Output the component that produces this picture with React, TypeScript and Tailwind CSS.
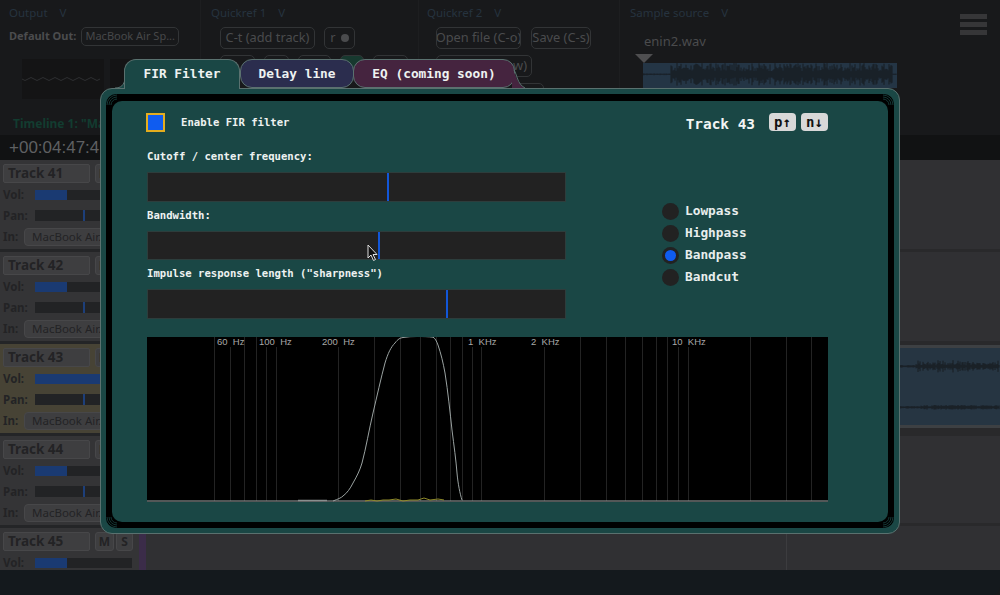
import type { ReactNode } from "react";

const mono = "font-['DejaVu_Sans_Mono',monospace]";

// deterministic noisy waveform, drawn as vertical ticks
function wave(width: number, mid: number, amp: (x: number) => number, seed: number) {
  let d = "";
  let s = seed;
  for (let x = 0; x < width; x += 1) {
    s = (s * 9301 + 49297) % 233280;
    const h = amp(x) * (0.25 + (s / 233280) * 0.75);
    d += `M${x} ${(mid - h).toFixed(1)}V${(mid + h + 0.6).toFixed(1)}`;
  }
  return d;
}

function GhostButton({ label, className }: { label: ReactNode; className: string }) {
  return (
    <div className={`h-[22px] flex items-center justify-center border border-[#323436] rounded-[5px] text-[#4a4b4d] text-[12.8px] whitespace-nowrap overflow-hidden ${className}`}>
      {label}
    </div>
  );
}

function SectionTitle({ label }: { label: string }) {
  return (
    <div className="flex gap-[12px] text-[#26333f] text-[11.5px] leading-none">
      <span>{label}</span>
      <span>V</span>
    </div>
  );
}

function TopPanels() {
  return (
    <div className="h-[135px] flex bg-[#18191b] font-['Noto_Sans',sans-serif]">
      <div className="w-[201px] shrink-0 border-r border-[#1d1e20] pl-[9px] pt-[7px]">
        <SectionTitle label="Output" />
        <div className="flex items-center gap-[5px] mt-[8px]">
          <span className="text-[11px] font-bold text-[#4b4c4e]">Default Out:</span>
          <div className="w-[98px] h-[19px] flex items-center justify-center border border-[#323436] rounded-[5px] text-[#47484a] text-[11px]">MacBook Air Sp...</div>
        </div>
        <div className="flex gap-[6px] ml-[13px] mt-[13px] h-[40px]">
          <div className="w-[82px] bg-[#141415] flex items-center">
            <svg width="82" height="40" viewBox="0 0 82 40">
              <path d="M0 20q3 3 6 0t6 0 6 0 6 0 6 0 6 0 6 0 6 0 6 0 6 0 6 0 6 0 6 0" fill="none" stroke="#2e2f31" strokeWidth="1" />
            </svg>
          </div>
          <div className="flex-1 bg-[#141415]" />
        </div>
        <div className="mt-[19px] ml-[4px] text-[12px] font-bold text-[#123c30] leading-none whitespace-nowrap">Timeline 1: "Main"</div>
      </div>
      <div className="w-[218px] shrink-0 border-r border-[#1d1e20] pl-[10px] pt-[7px]">
        <SectionTitle label="Quickref 1" />
        <div className="flex gap-[9px] ml-[9px] mt-[8px]">
          <GhostButton label="C-t (add track)" className="w-[95px]" />
          <GhostButton
            label={
              <span className="flex items-center gap-[5px]">
                r<span className="w-[8px] h-[8px] rounded-full bg-[#4a4b4d]" />
              </span>
            }
            className="w-[31px]"
          />
        </div>
        <div className="flex gap-[9px] ml-[9px] mt-[6px]">
          <GhostButton label="" className="w-[35px]" />
          <GhostButton label="" className="w-[25px]" />
          <GhostButton label="" className="w-[33px]" />
          <GhostButton label="" className="w-[24px] bg-[#17392f]" />
          <GhostButton label="" className="w-[35px]" />
        </div>
      </div>
      <div className="w-[201px] shrink-0 border-r border-[#1d1e20] pl-[8px] pt-[7px]">
        <SectionTitle label="Quickref 2" />
        <div className="flex gap-[10px] ml-[9px] mt-[8px]">
          <GhostButton label="Open file (C-o)" className="w-[85px]" />
          <GhostButton label="Save (C-s)" className="w-[60px]" />
        </div>
        <div className="ml-[9px] mt-[6px] w-[96px]">
          <GhostButton label="w)" className="w-[96px] justify-end! pr-[4px]" />
        </div>
        <div className="ml-[9px] mt-[6px] w-[108px]">
          <GhostButton label="" className="w-[108px]" />
        </div>
      </div>
      <div className="flex-1 relative pl-[10px] pt-[7px]">
        <SectionTitle label="Sample source" />
        <div className="ml-[14px] mt-[16px] text-[13px] leading-none text-[#4a4b4d]">enin2.wav</div>
        <svg width="18" height="9" viewBox="0 0 18 9" className="ml-[5px] mt-[6px] block">
          <path d="M0 0H18L9 9Z" fill="#4e4e50" />
        </svg>
        <div className="ml-[13px] w-[254px] h-[25px] bg-[#243545] overflow-hidden">
          <svg width="254" height="25" viewBox="0 0 254 25">
            <path d={wave(254, 11, (x) => (x < 28 ? 0.6 : x < 250 ? 11 : 0.5), 17)} stroke="#15181b" strokeWidth="0.8" />
          </svg>
        </div>
        <div className="absolute left-[340px] top-[14px] flex flex-col gap-[3px]">
          <div className="w-[27px] h-[5px] bg-[#363638]" />
          <div className="w-[27px] h-[5px] bg-[#363638]" />
          <div className="w-[27px] h-[5px] bg-[#363638]" />
        </div>
      </div>
    </div>
  );
}

function TrackStrip({ name, active, volWidth, short }: { name: string; active?: boolean; volWidth: string; short?: boolean }) {
  return (
    <div className={`overflow-hidden pl-[3px] pt-[4px] font-['Noto_Sans',sans-serif] ${active ? "bg-[#474335]" : "bg-[#343436]"} ${short ? "h-[50px]" : "h-[92px] border-b-[3px] border-[#242527]"}`}>
      <div className="flex">
        <div className="w-[87px] h-[19px] flex items-center pl-[4px] bg-[#3e3e40] border border-[#474749] rounded-[2px] text-[13.5px] font-bold text-[#232325]">{name}</div>
        <div className="w-[19px] h-[19px] ml-[5px] flex items-center justify-center bg-[#3e3e40] border border-[#474749] rounded-[3px] text-[12px] font-bold text-[#232325]">M</div>
        <div className="w-[17px] h-[19px] ml-[2px] flex items-center justify-center bg-[#3e3e40] border border-[#474749] rounded-[3px] text-[12px] font-bold text-[#232325]">S</div>
      </div>
      <div className="flex items-center h-[20px] mt-[2px]">
        <span className="w-[32px] text-[11.5px] font-bold text-[#232325]">Vol:</span>
        <div className="w-[97px] h-[10px] bg-[#222325]">
          <div className={`h-full bg-[#1a3a72] ${volWidth}`} />
        </div>
      </div>
      {!short && (
        <>
          <div className="flex items-center h-[21px]">
            <span className="w-[32px] text-[11.5px] font-bold text-[#232325]">Pan:</span>
            <div className="w-[97px] h-[11px] bg-[#222325] pl-[48px]">
              <div className="w-[2px] h-full bg-[#1d3f7a]" />
            </div>
          </div>
          <div className="flex items-center h-[21px]">
            <span className="w-[21px] text-[11.5px] font-bold text-[#232325]">In:</span>
            <div className="w-[108px] h-[18px] flex items-center pl-[7px] bg-[#3e3e40] border border-[#474749] rounded-[4px] text-[11.5px] text-[#232325] whitespace-nowrap overflow-hidden">MacBook Air...</div>
          </div>
        </>
      )}
    </div>
  );
}

function Arrangement() {
  return (
    <div className="flex-1 flex min-h-0 overflow-hidden">
      <div className="w-[139px] shrink-0">
        <TrackStrip name="Track 41" volWidth="w-[32px]" />
        <TrackStrip name="Track 42" volWidth="w-[32px]" />
        <TrackStrip name="Track 43" volWidth="w-[80px]" active />
        <TrackStrip name="Track 44" volWidth="w-[32px]" />
        <TrackStrip name="Track 45" volWidth="w-[32px]" short />
      </div>
      <div className="w-[7px] shrink-0 bg-[#3b2c49]" />
      <div className="flex-1 bg-[#303033] flex flex-col">
        <div className="h-[92px] border-b-[3px] border-[#29292b]" />
        <div className="h-[92px] border-b-[3px] border-[#29292b]" />
        <div className="h-[92px] border-b-[3px] border-[#29292b] bg-[#29292b] pt-[1px]">
          <div className="h-[83px] bg-[#263542] border-y-[3px] border-r-2 border-[#3d4043] overflow-hidden">
            <svg width="854" height="77" viewBox="0 0 854 77">
              <path d={wave(854, 18, (x) => (x < 770 ? 1 : 2 + ((x * 7) % 5)), 41)} stroke="#14171a" strokeWidth="0.8" />
              <path d={wave(854, 59, (x) => (x < 775 ? 1 : 2 + ((x * 5) % 5)), 83)} stroke="#14171a" strokeWidth="0.8" />
            </svg>
          </div>
        </div>
        <div className="h-[90px] border-b-[3px] border-[#29292b]" />
        <div className="flex-1 pl-[640px]">
          <div className="w-px h-full bg-[#3c3c3f]" />
        </div>
      </div>
    </div>
  );
}

function Background() {
  return (
    <div className="w-[1000px] h-[595px] flex flex-col bg-[#18191b] overflow-hidden">
      <TopPanels />
      <div className="h-[25px] bg-[#111213] pl-[9px] pt-[1px] text-[17px] leading-[24px] text-[#5f6062] font-['Liberation_Sans',sans-serif]">+00:04:47:4</div>
      <Arrangement />
      <div className="h-[25px] bg-[#14191d] rounded-br-[8px]" />
    </div>
  );
}

function Tab({ label, className }: { label: string; className: string }) {
  return (
    <div className={`flex items-center justify-center rounded-[12px] border border-[#5a716f] font-bold text-[12.8px] text-[#eef2f1] ${mono} ${className}`}>
      {label}
    </div>
  );
}

function Slider({ label, pos }: { label: string; pos: string }) {
  return (
    <div>
      <div className={`h-[14px] flex items-center font-bold text-[10.6px] text-[#eef2f1] ${mono}`}>{label}</div>
      <div className="h-[29.5px] mt-[8px] bg-[#222222] border border-[#2d3d3c] flex">
        <div className={pos} />
        <div className="w-[2px] bg-[#1257d8]" />
      </div>
    </div>
  );
}

function Radio({ label, checked }: { label: string; checked?: boolean }) {
  return (
    <div className="h-[22px] flex items-center gap-[6px]">
      <div className="w-[17px] h-[17px] rounded-full bg-[#222222] flex items-center justify-center">
        {checked && <div className="w-[11px] h-[11px] rounded-full bg-[#0f5cf0]" />}
      </div>
      <span className={`font-bold text-[12.8px] text-[#e8eeed] ${mono}`}>{label}</span>
    </div>
  );
}

const gridLines = [214.5, 230.5, 244.5, 256.5, 266.5, 276.5, 338.5, 374.5, 400.5, 420.5, 436.5, 450.5, 462.5, 472.5, 481.5, 544.5, 580.5, 606.5, 625.5, 642.5, 656.5, 667.5, 678.5, 688.5, 750.5, 786.5, 811.5];
// these start below their frequency label
const underLabel = [230.5, 266.5, 276.5, 338.5, 472.5, 481.5, 544.5, 678.5, 688.5];
const freqLabels: [number, string][] = [[217, "60  Hz"], [259, "100  Hz"], [322, "200  Hz"], [468, "1  KHz"], [531, "2  KHz"], [672, "10  KHz"]];

function Spectrum() {
  return (
    <svg width="681" height="165" viewBox="147 337 681 165" className="block bg-black">
      {gridLines.map((x) => (
        <line key={x} x1={x} x2={x} y1={underLabel.includes(x) ? 347 : 337} y2="501" stroke="#232323" strokeWidth="1" />
      ))}
      {freqLabels.map(([x, t]) => (
        <text key={t} x={x} y="345" fill="#a8a8a8" fontSize="9.5" fontFamily="'Liberation Sans',sans-serif" xmlSpace="preserve">{t}</text>
      ))}
      <line x1="147" x2="828" y1="501" y2="501" stroke="#a5aeae" strokeWidth="1" />
      <path d="M298 500.5H327" stroke="#8a8f8f" strokeWidth="1.5" />
      <path d="M365 501l6-1 6 1 6-1 6 0 7-1 7 2 7-1 8 0 6-2 6 2 8-1 6 1" fill="none" stroke="#8f8a2a" strokeWidth="1" />
      <path d="M333 501C338 499 341 498 343 496C347 493 350 489 353 483C357 476 360 470 362 463C366 448 369 430 373 413C377 396 381 378 385 363C388 353 391 347 395 343C398 339 400 338 403 337.5C408 336.7 412 336.5 417 336.5C423 336.5 429 336.6 433 337.2C435 338 436.5 341 438 345C441 354 443 362 445 373C448 392 450 412 452 430C454 446 456 460 457 473C458 484 460 494 462 500" fill="none" stroke="#9aa2a1" strokeWidth="1" />
    </svg>
  );
}

// fine hatch in the outer corners of the black ring
function Hatch({ className }: { className: string }) {
  return (
    <svg width="11" height="11" viewBox="0 0 11 11" className={`absolute ${className}`}>
      <path d="M1 11A10 10 0 0 1 11 1M3 11A8 8 0 0 1 11 3M5 11A6 6 0 0 1 11 5" fill="none" stroke="#143634" strokeWidth="1" />
    </svg>
  );
}

function FirModal() {
  return (
    <div className="absolute left-[100px] top-[59px] w-[800px]">
      <div className="relative z-10 h-[29px] flex pl-[24px]">
        <svg width="10" height="9" viewBox="0 0 10 9" className="absolute left-[15px] top-[20px]">
          <path d="M10 0V9H0C6 9 9 6 10 0Z" fill="#1a4745" />
          <path d="M10 0C9 6 6 9 0 9" fill="none" stroke="#5a716f" />
        </svg>
        <Tab label="FIR Filter" className="relative z-20 w-[116px] h-[30px] pb-[2px] bg-[#1a4745] rounded-b-none border-b-0" />
        <Tab label="Delay line" className="w-[114px] h-[29px] bg-[#2b2d4e]" />
        <div className="relative">
          <Tab label="EQ (coming soon)" className="w-[162px] h-[29px] bg-[#45243f] -ml-px" />
          <svg width="14" height="18" viewBox="0 0 14 18" className="absolute left-[158px] top-[11px]">
            <path d="M0 0C4 2 4 14 13 18H0Z" fill="#45243f" />
            <path d="M2 0C5 4 5 14 13 18" fill="none" stroke="#5a716f" />
          </svg>
        </div>
      </div>
      <div className="h-[446px] rounded-[12px] bg-[#1a4745] border border-[#5a716f] p-[5px]">
        <div className="relative h-full rounded-[10px] bg-black px-[6px] pt-[7px] pb-[6px]">
          <Hatch className="left-0 top-0" />
          <Hatch className="right-0 top-0 rotate-90" />
          <Hatch className="left-0 bottom-0 -rotate-90" />
          <Hatch className="right-0 bottom-0 rotate-180" />
          <div className="relative h-full rounded-[10px] bg-[#1a4745] pl-[35px] pr-[60px] pt-[12px] flex flex-col">
            <div className="flex items-start h-[19px]">
              <div className="w-[19px] h-[19px] -ml-px border-2 border-[#e4ad1e] bg-[#0f5cf0]" />
              <span className={`ml-[16px] leading-[19px] font-bold text-[10.6px] text-[#eef2f1] ${mono}`}>Enable FIR filter</span>
              <span className={`ml-auto mr-[14px] mt-px leading-[20px] font-bold text-[14.4px] text-[#f2f5f4] ${mono}`}>Track 43</span>
              <div className={`w-[27px] h-[18px] flex items-center justify-center rounded-[4px] bg-[#d8d8d8] text-[#111] font-bold text-[14px] ${mono}`}>p↑</div>
              <div className={`w-[27px] h-[18px] ml-[5px] flex items-center justify-center rounded-[4px] bg-[#d8d8d8] text-[#111] font-bold text-[14px] ${mono}`}>n↓</div>
            </div>
            <div className="flex mt-[18px]">
              <div className="w-[419px] flex flex-col gap-[7px]">
                <Slider label="Cutoff / center frequency:" pos="w-[239px]" />
                <Slider label="Bandwidth:" pos="w-[230px]" />
                <Slider label={'Impulse response length ("sharpness")'} pos="w-[298px]" />
              </div>
              <div className="ml-[96px] mt-[50px]">
                <Radio label="Lowpass" />
                <Radio label="Highpass" />
                <Radio label="Bandpass" checked />
                <Radio label="Bandcut" />
              </div>
            </div>
            <div className="mt-[18.5px]">
              <Spectrum />
            </div>
            <svg width="12" height="18" viewBox="0 0 12 18" className="absolute left-[255px] top-[143px]">
              <path d="M1 1V14L4 11L6.5 16.5L8.5 15.5L6 10.5H10Z" fill="#111" stroke="#ddd" strokeWidth="1" />
            </svg>
          </div>
        </div>
      </div>
    </div>
  );
}

export default function App() {
  return (
    <div className="relative w-[1000px] h-[595px] overflow-hidden">
      <Background />
      <FirModal />
    </div>
  );
}
